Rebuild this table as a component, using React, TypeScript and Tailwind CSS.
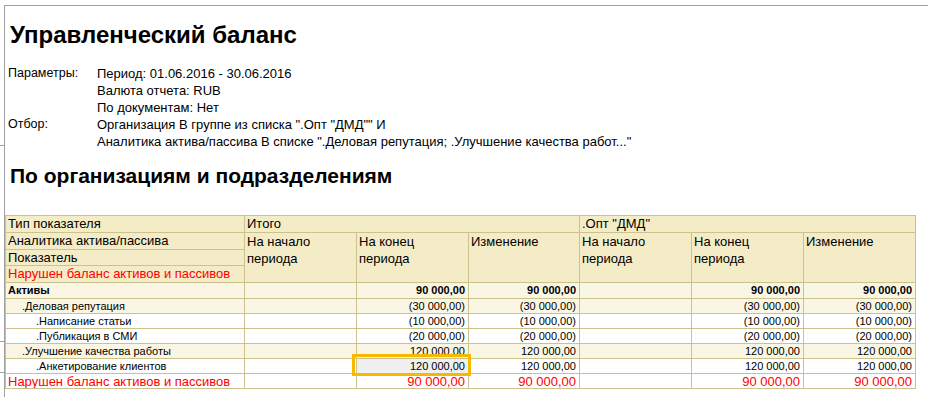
import React from "react";

type Row = {
  label: string;
  level: number;
  bold?: boolean;
  light?: boolean;
  red?: boolean;
  vals: string[];
};

const rows: Row[] = [
  { label: "Активы", level: 0, bold: true, light: true, vals: ["", "90 000,00", "90 000,00", "", "90 000,00", "90 000,00"] },
  { label: ".Деловая репутация", level: 1, light: true, vals: ["", "(30 000,00)", "(30 000,00)", "", "(30 000,00)", "(30 000,00)"] },
  { label: ".Написание статьи", level: 2, vals: ["", "(10 000,00)", "(10 000,00)", "", "(10 000,00)", "(10 000,00)"] },
  { label: ".Публикация в СМИ", level: 2, vals: ["", "(20 000,00)", "(20 000,00)", "", "(20 000,00)", "(20 000,00)"] },
  { label: ".Улучшение качества работы", level: 1, light: true, vals: ["", "120 000,00", "120 000,00", "", "120 000,00", "120 000,00"] },
  { label: ".Анкетирование клиентов", level: 2, vals: ["", "120 000,00", "120 000,00", "", "120 000,00", "120 000,00"] },
  { label: "Нарушен баланс активов и пассивов", level: 0, red: true, vals: ["", "90 000,00", "90 000,00", "", "90 000,00", "90 000,00"] },
];

const levelPad = ["pl-[2px]", "pl-[16px]", "pl-[30px]"];
const rowHeights = ["h-[16px]", "h-[15px]", "h-[15px]", "h-[15px]", "h-[15px]", "h-[15px]", "h-[15px]"];

const B = "border-r border-b border-[#cdc18e]";
const HBG = "bg-[#f4ecc6]";

function HeaderSub({ label }: { label: React.ReactNode }) {
  return (
    <div className={`${B} ${HBG} row-span-3 pl-[2px] text-[13px] leading-[16.5px] pt-[1px] text-black`}>{label}</div>
  );
}

export default function App() {
  return (
    <div className="relative w-[928px] h-[397px] overflow-hidden bg-white font-['Liberation_Sans',Arial,sans-serif] text-black">
      {/* frame ticks */}
      <div className="absolute left-0 top-[145px] w-[4px] h-px bg-[#a0a0a0]" />
      <div className="absolute left-0 top-[341px] w-[4px] h-px bg-[#a0a0a0]" />
      <div className="absolute left-0 top-[372px] w-[4px] h-px bg-[#a0a0a0]" />
      <div className="mt-[5px] ml-[4px] h-[392px] border-t border-l border-[#a0a0a0]">
        <div className="pl-[3px]">
          <h1 className="mt-[15px] ml-[2px] text-[24px] leading-[28px] font-bold">Управленческий баланс</h1>
          <div className="mt-[16px] grid grid-cols-[89px_1fr] text-[13px] leading-[17px]">
            <div className="text-[12.5px]">Параметры:</div>
            <div>Период: 01.06.2016 - 30.06.2016</div>
            <div></div>
            <div>Валюта отчета: RUB</div>
            <div></div>
            <div>По документам: Нет</div>
            <div className="text-[12.5px]">Отбор:</div>
            <div>Организация В группе из списка ".Опт "ДМД"" И</div>
            <div></div>
            <div>Аналитика актива/пассива В списке ".Деловая репутация; .Улучшение качества работ..."</div>
          </div>
          <h2 className="mt-[14px] ml-[2px] text-[21px] leading-[24px] font-bold">По организациям и подразделениям</h2>
        </div>
        <div className="mt-[27px] w-[911px] grid grid-cols-[239px_112px_112px_111px_112px_112px_112px] border-l border-t border-[#cdc18e]">
          {/* header row 1 */}
          <div className={`${B} ${HBG} h-[17px] pl-[2px] text-[13px] leading-[16px]`}>Тип показателя</div>
          <div className={`${B} ${HBG} col-span-3 pl-[2px] text-[13px] leading-[16px]`}>Итого</div>
          <div className={`${B} ${HBG} col-span-3 pl-[2px] text-[13px] leading-[16px]`}>.Опт "ДМД"</div>
          {/* header row 2 */}
          <div className={`${B} ${HBG} h-[17px] pl-[2px] text-[13px] leading-[16px]`}>Аналитика актива/пассива</div>
          <HeaderSub label={<>На начало<br />периода</>} />
          <HeaderSub label={<>На конец<br />периода</>} />
          <HeaderSub label="Изменение" />
          <HeaderSub label={<>На начало<br />периода</>} />
          <HeaderSub label={<>На конец<br />периода</>} />
          <HeaderSub label="Изменение" />
          {/* header row 3 */}
          <div className={`${B} ${HBG} h-[16px] pl-[2px] text-[13px] leading-[15px]`}>Показатель</div>
          {/* header row 4 */}
          <div className={`${B} ${HBG} h-[17px] pl-[2px] text-[13px] leading-[16px] text-[#ff0000]`}>Нарушен баланс активов и пассивов</div>

          {rows.map((r, ri) => {
            const bg = r.light ? "bg-[#faf6e4]" : "bg-white";
            const size = r.red ? "text-[13px] text-[#ff0000]" : "text-[11px]";
            const weight = r.bold ? "font-bold" : "font-normal";
            return (
              <React.Fragment key={ri}>
                <div className={`${B} ${bg} ${rowHeights[ri]} ${levelPad[r.level]} ${size} ${weight} leading-[15px] whitespace-nowrap overflow-hidden`}>
                  {r.label}
                </div>
                {r.vals.map((v, vi) => {
                  const selected = ri === 5 && vi === 1;
                  return (
                    <div
                      key={vi}
                      className={`${B} ${selected ? "bg-[#f0f0f0] relative" : bg} ${rowHeights[ri]} pr-[3px] text-right ${size} ${weight} leading-[15px] whitespace-nowrap`}
                    >
                      {v}
                      {selected && (
                        <div className="absolute left-[-5px] top-[-5px] w-[119px] h-[22px] border-[3px] border-[#f7b900] pointer-events-none" />
                      )}
                    </div>
                  );
                })}
              </React.Fragment>
            );
          })}
        </div>
      </div>
    </div>
  );
}
